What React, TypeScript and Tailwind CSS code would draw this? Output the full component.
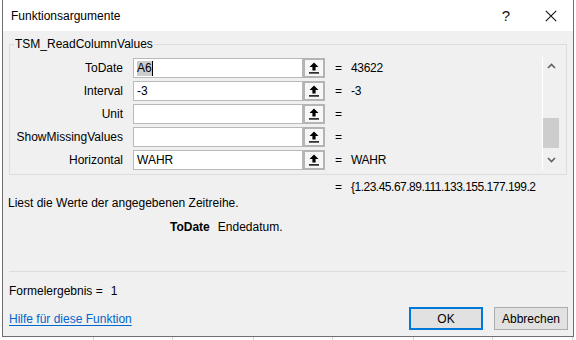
import React from "react";

interface ArgRow {
  label: string;
  value: string;
  result: string;
  selected?: boolean;
}

const ROWS: ArgRow[] = [
  { label: "ToDate", value: "A6", result: "43622", selected: true },
  { label: "Interval", value: "-3", result: "-3" },
  { label: "Unit", value: "", result: "" },
  { label: "ShowMissingValues", value: "", result: "" },
  { label: "Horizontal", value: "WAHR", result: "WAHR" },
];

const SHEET_COLS = [94, 79, 81, 79, 81, 79, 80];

function RefButton() {
  return (
    <div className="w-[22px] h-[20px] shrink-0 border-2 border-[#b4b4b4] bg-[#f7f7f7] flex items-center justify-center">
      <svg width="10" height="12" viewBox="0 0 10 12">
        <path d="M5 0.5 L9.5 5 H6.6 V8.5 H3.4 V5 H0.5 Z" fill="#000" />
        <rect x="0" y="10.2" width="10" height="1.4" fill="#000" />
      </svg>
    </div>
  );
}

function Chevron({ up }: { up?: boolean }) {
  return (
    <svg width="9" height="6" viewBox="0 0 9 6">
      <path
        d={up ? "M1 5 L4.5 1.5 L8 5" : "M1 1 L4.5 4.5 L8 1"}
        stroke="#606060"
        strokeWidth="1.6"
        fill="none"
      />
    </svg>
  );
}

function ArgumentRow({ row }: { row: ArgRow }) {
  return (
    <div className="flex items-center h-[20px]">
      <div className="w-[114px] shrink-0 text-right pr-px">{row.label}</div>
      <div className="ml-[9px] w-[170px] h-[20px] shrink-0 bg-white border border-[#b9b9b9] flex items-center pl-[3px]">
        {row.selected ? (
          <>
            <span className="bg-[#cccccc] leading-[15px]">{row.value}</span>
            <span className="w-px h-[15px] bg-black" />
          </>
        ) : (
          <span>{row.value}</span>
        )}
      </div>
      <RefButton />
      <span className="ml-[10px] w-[7px]">=</span>
      <span className="ml-[9px] tracking-[-0.3px]">{row.result}</span>
    </div>
  );
}

export default function App() {
  return (
    <div className="relative w-[576px] h-[340px] bg-white overflow-hidden font-['Liberation_Sans',Arial,sans-serif] text-[12px] leading-[14px] text-black">
      {/* spreadsheet behind the dialog */}
      <div className="flex h-full">
        {SHEET_COLS.map((w, i) => (
          <div key={i} className="h-full shrink-0 border-r border-[#d4d4d4]" style={{ width: w }} />
        ))}
      </div>

      {/* dialog window */}
      <div className="absolute left-[2px] top-0 w-[572px] h-[337px] border-l border-r border-b border-[#6f6f6f] bg-[#f0f0f0] flex flex-col">
        {/* title bar */}
        <div className="h-[31px] shrink-0 bg-white flex items-center pl-[8px]">
          <span className="flex-1 pt-px">Funktionsargumente</span>
          <span className="w-[12px] text-center text-[15px] text-[#111] mr-[32px]">?</span>
          <span className="w-[14px] flex justify-center mr-[15px]">
            <svg width="12" height="12" viewBox="0 0 12 12">
              <path d="M0.8 0.8 L11.2 11.2 M11.2 0.8 L0.8 11.2" stroke="#111" strokeWidth="1.1" />
            </svg>
          </span>
        </div>

        {/* group box */}
        <div className="relative mt-[13px] ml-[6px] w-[558px] h-[131px] border border-[#dcdcdc] flex">
          <span className="absolute left-[4px] -top-[8px] px-px bg-[#f0f0f0]">TSM_ReadColumnValues</span>
          <div className="flex-1 pt-[13px] flex flex-col gap-[3px]">
            {ROWS.map((row) => (
              <ArgumentRow key={row.label} row={row} />
            ))}
          </div>
          <div className="mt-[12px] mr-[7px] w-[17px] h-[113px] border-l border-white flex flex-col items-center">
            <div className="h-[18px] flex items-center">
              <Chevron up />
            </div>
            <div className="flex-1 w-full flex flex-col justify-end pb-[5px]">
              <div className="h-[30px] w-full bg-[#cdcdcd]" />
            </div>
            <div className="h-[17px] flex items-start pt-[4px]">
              <Chevron />
            </div>
          </div>
        </div>

        {/* overall result */}
        <div className="mt-[5px] h-[14px] flex pl-[332px]">
          <span className="w-[7px]">=</span>
          <span className="ml-[9px] tracking-[-0.5px]">{"{1.23.45.67.89.111.133.155.177.199.2"}</span>
        </div>

        <div className="mt-[2px] h-[14px] pl-[5px]">Liest die Werte der angegebenen Zeitreihe.</div>

        <div className="mt-[10px] h-[14px] pl-[167px] flex">
          <span className="font-bold">ToDate</span>
          <span className="ml-[8px]">Endedatum.</span>
        </div>

        <div className="mt-[37px] ml-[6px] w-[558px] h-px bg-[#dcdcdc]" />

        <div className="mt-[12px] h-[14px] pl-[6px] flex">
          <span>Formelergebnis =</span>
          <span className="ml-[8px]">1</span>
        </div>

        <div className="mt-[9px] h-[23px] flex items-center pl-[6px]">
          <span className="flex-1 text-[#0066cc] underline underline-offset-[2px]">Hilfe für diese Funktion</span>
          <button className="w-[74px] h-[23px] border-2 border-[#0078d7] bg-[#e1e1e1] flex items-center justify-center">
            OK
          </button>
          <button className="ml-[11px] mr-[5px] w-[74px] h-[23px] border border-[#adadad] bg-[#e1e1e1] flex items-center justify-center">
            Abbrechen
          </button>
        </div>
      </div>
    </div>
  );
}
